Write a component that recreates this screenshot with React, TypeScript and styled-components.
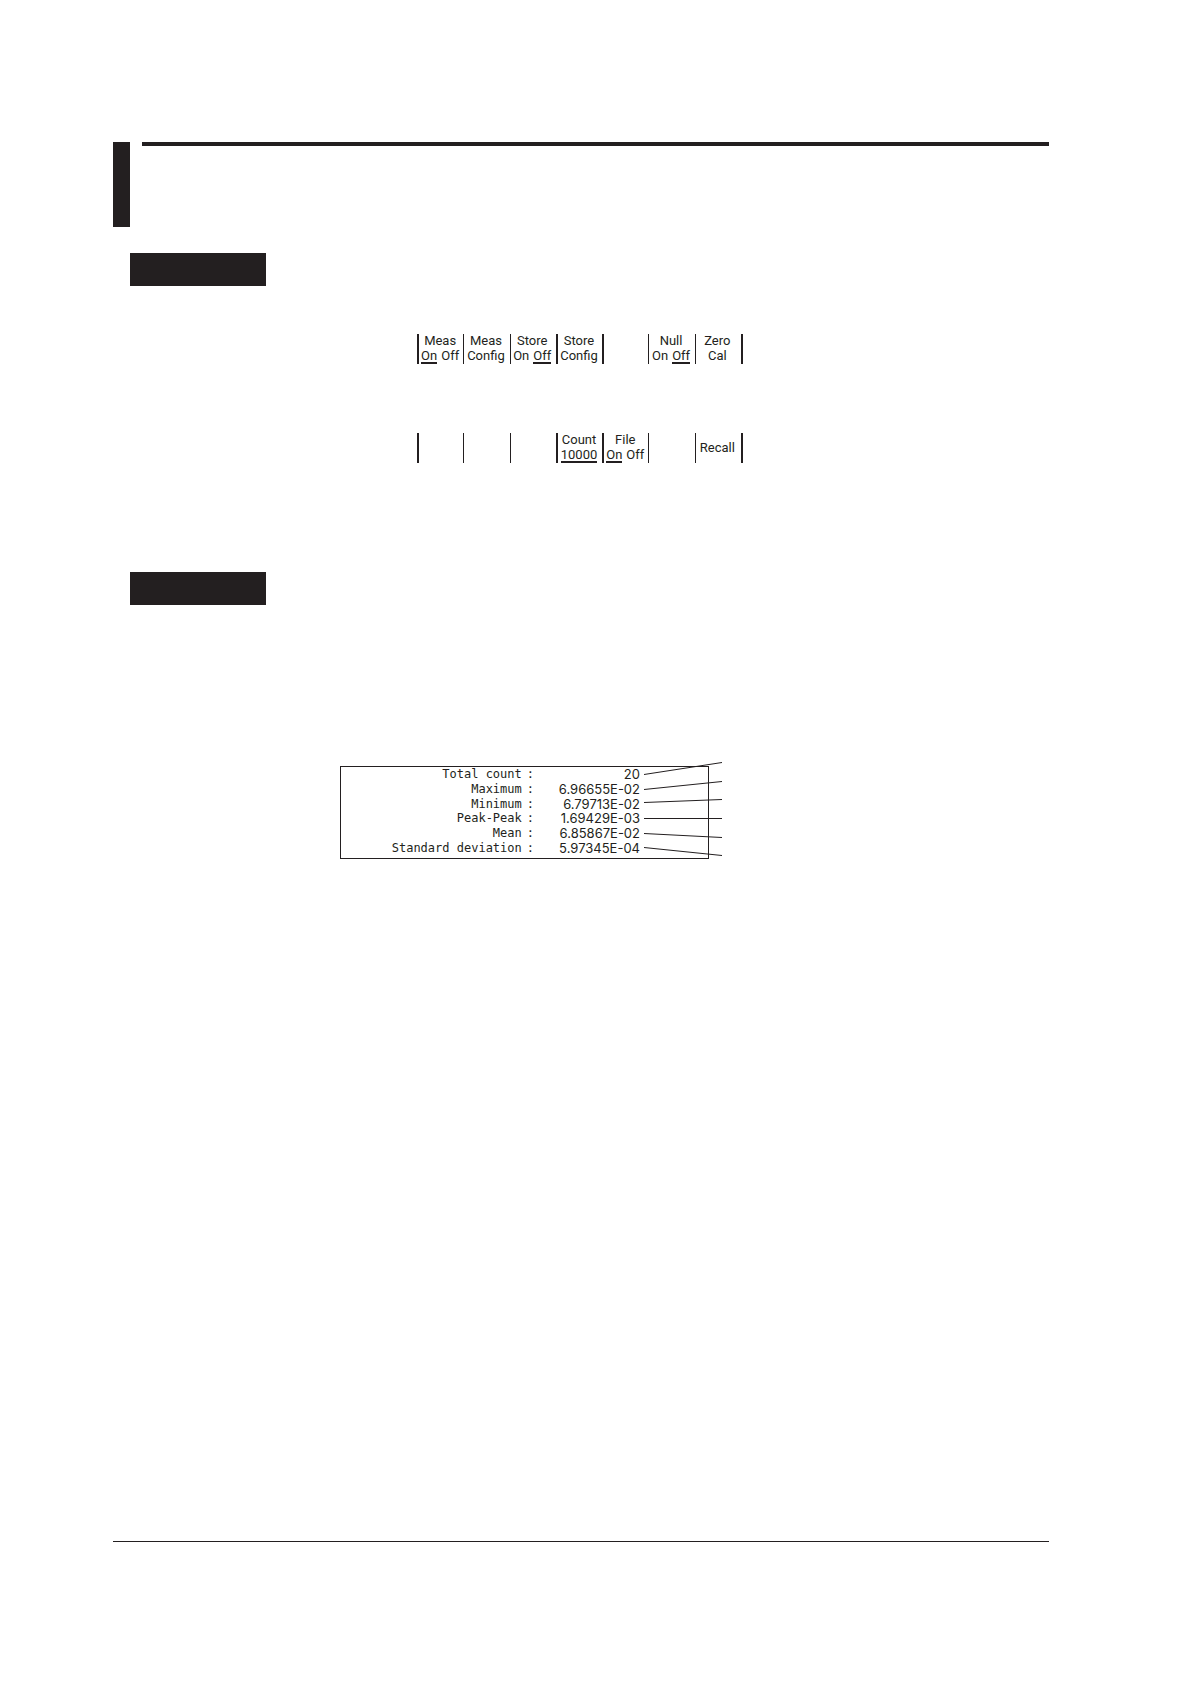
import React from "react";
import styled, { createGlobalStyle } from "styled-components";

const ink = "#231f20";

const GlobalStyle = createGlobalStyle`
  *, *::before, *::after { box-sizing: border-box; }
  body { margin: 0; background: #fff; color: ${ink}; }
`;

const Page = styled.main`
  display: flex;
  flex-direction: column;
  min-height: 100vh;
  padding: 142px 142px 142px 113px;
`;

const Header = styled.header`
  display: flex;
  gap: 12px;
  align-items: flex-start;
`;

const ChapterBar = styled.div`
  width: 17px;
  height: 85px;
  background: ${ink};
`;

const HeaderRule = styled.div`
  flex: 1;
  height: 4px;
  background: ${ink};
`;

const Section = styled.section<{ $before: number; $gap: number }>`
  display: flex;
  flex-direction: column;
  align-items: flex-start;
  gap: ${(p) => p.$gap}px;
  margin-top: ${(p) => p.$before}px;
  padding-left: 17px;
`;

const SectionTag = styled.div`
  width: 136px;
  height: 33px;
  background: ${ink};
`;

const Menus = styled.div`
  display: flex;
  flex-direction: column;
  gap: 69px;
  margin-left: 287px;
`;

const KeyRow = styled.div`
  display: grid;
  grid-template-columns: repeat(7, 1fr);
  grid-template-rows: 30px;
  width: 326px;
  border-right: 2px solid ${ink};
`;

const Key = styled.button<{ $edge: number }>`
  display: flex;
  flex-direction: column;
  align-items: center;
  justify-content: center;
  min-width: 0;
  padding: 0 2px 0 0;
  border: 0;
  border-left: ${(p) => p.$edge}px solid ${ink};
  background: none;
  color: ${ink};
  font: 13px/15px Roboto, "Liberation Sans", sans-serif;
  white-space: pre;
`;

const KeyLine = styled.span`
  display: flex;
  height: 15px;
  line-height: 13px;
  gap: 4px;
`;

const Choice = styled.span<{ $active?: boolean }>`
  height: 15px;
  border-bottom: 2px solid ${(p) => (p.$active ? ink : "transparent")};
`;

const Statistics = styled.div`
  position: relative;
  width: 369px;
  margin-left: 210px;
  border: 1px solid ${ink};
  padding: 0 68px 3px 0;
`;

const Table = styled.table`
  width: 100%;
  height: 88px;
  border-collapse: collapse;
  font: 12px/14px "DejaVu Sans Mono", "Liberation Mono", monospace;
`;

const Label = styled.th`
  padding: 0;
  font-weight: 400;
  text-align: right;
  white-space: pre;
`;

const Colon = styled.span`
  margin-left: 5px;
`;

const Value = styled.td`
  width: 106px;
  padding: 0;
  font: 13px/14px Inter, "Liberation Sans", sans-serif;
  text-align: right;
`;

const Leaders = styled.svg`
  position: absolute;
  left: 303px;
  top: -6px;
`;

const Footer = styled.footer`
  height: 1px;
  margin-top: auto;
  background: ${ink};
`;

type KeyDef = { top?: string; bottom?: string; options?: string[]; active?: string; edge: number };

const mainMenu: KeyDef[] = [
  { top: "Meas", options: ["On", "Off"], active: "On", edge: 2 },
  { top: "Meas", bottom: "Config", edge: 1 },
  { top: "Store", options: ["On", "Off"], active: "Off", edge: 1 },
  { top: "Store", bottom: "Config", edge: 2 },
  { edge: 2 },
  { top: "Null", options: ["On", "Off"], active: "Off", edge: 1 },
  { top: "Zero", bottom: "Cal", edge: 1 },
];

const storeMenu: KeyDef[] = [
  { edge: 2 },
  { edge: 1 },
  { edge: 1 },
  { top: "Count", options: ["10000"], active: "10000", edge: 2 },
  { top: "File", options: ["On", "Off"], active: "On", edge: 2 },
  { edge: 1 },
  { top: "Recall", edge: 1 },
];

const statistics = [
  ["Total count", "20"],
  ["Maximum", "6.96655E-02"],
  ["Minimum", "6.79713E-02"],
  ["Peak-Peak", "1.69429E-03"],
  ["Mean", "6.85867E-02"],
  ["Standard deviation", "5.97345E-04"],
];

const leaderEnds = [
  [14, 2],
  [29, 21],
  [42, 39],
  [58, 58],
  [73, 77],
  [87, 95],
];

function SoftKeys({ keys }: { keys: KeyDef[] }) {
  return (
    <KeyRow>
      {keys.map((k, i) => (
        <Key key={i} type="button" $edge={k.edge}>
          {k.top && <KeyLine>{k.top}</KeyLine>}
          {k.bottom && <KeyLine>{k.bottom}</KeyLine>}
          {k.options && (
            <KeyLine>
              {k.options.map((o) => (
                <Choice key={o} $active={o === k.active}>
                  {o}
                </Choice>
              ))}
            </KeyLine>
          )}
        </Key>
      ))}
    </KeyRow>
  );
}

export default function App() {
  return (
    <>
      <GlobalStyle />
      <Page>
        <Header>
          <ChapterBar />
          <HeaderRule />
        </Header>
        <Section $before={26} $gap={48}>
          <SectionTag />
          <Menus>
            <SoftKeys keys={mainMenu} />
            <SoftKeys keys={storeMenu} />
          </Menus>
        </Section>
        <Section $before={109} $gap={161}>
          <SectionTag />
          <Statistics>
            <Table>
              <tbody>
                {statistics.map(([label, value]) => (
                  <tr key={label}>
                    <Label scope="row">
                      {label}
                      <Colon>:</Colon>
                    </Label>
                    <Value>{value}</Value>
                  </tr>
                ))}
              </tbody>
            </Table>
            <Leaders width="80" height="98" viewBox="0 0 80 98" stroke={ink} aria-hidden="true">
              {leaderEnds.map(([from, to]) => (
                <line key={from} x1="0" y1={from - 0.5} x2="78" y2={to - 0.5} />
              ))}
            </Leaders>
          </Statistics>
        </Section>
        <Footer />
      </Page>
    </>
  );
}
